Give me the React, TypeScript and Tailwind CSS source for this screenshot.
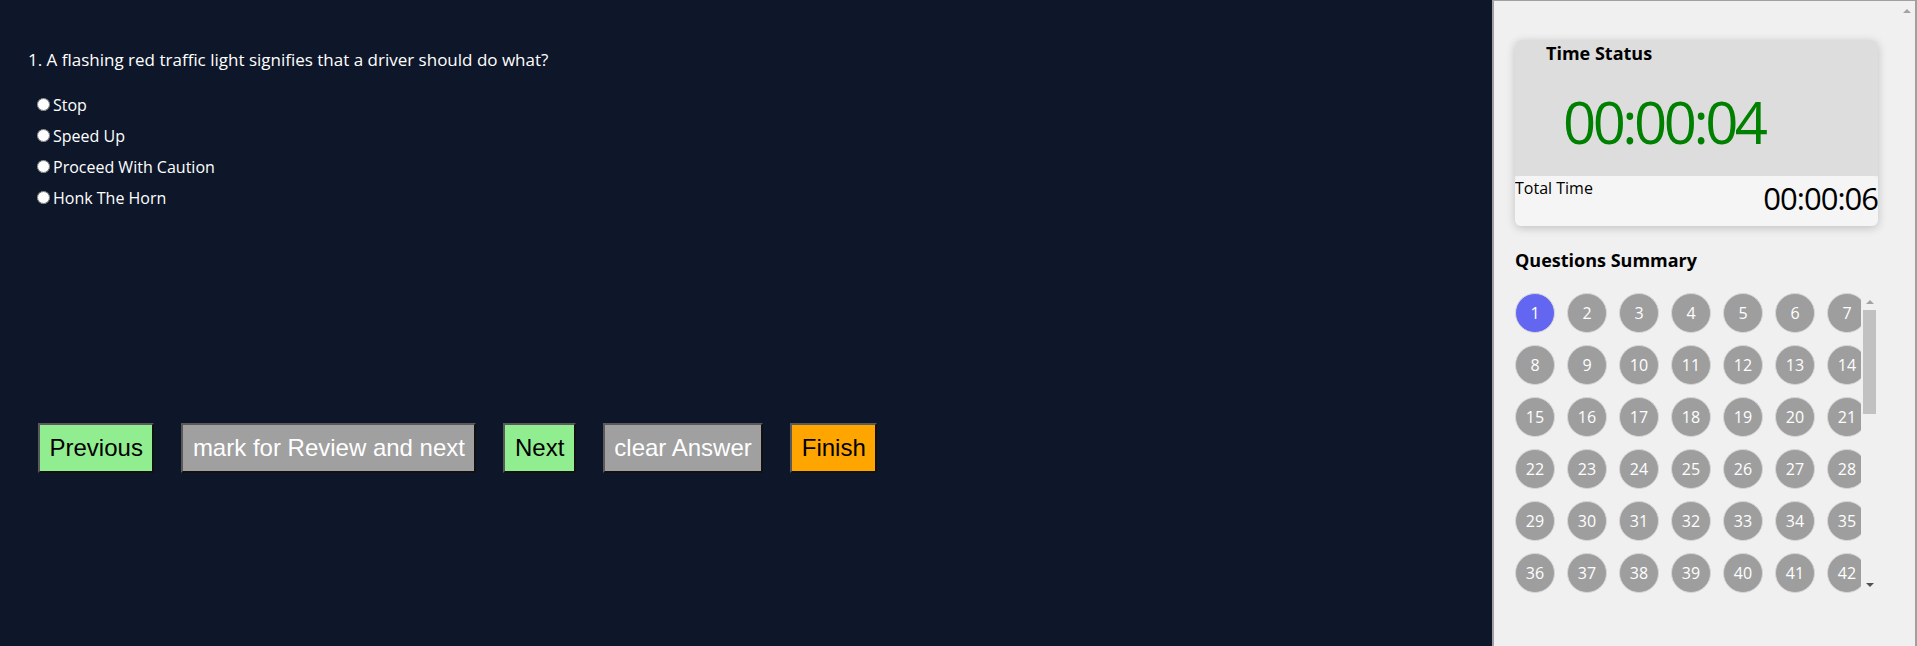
import React from 'react';

const options = ['Stop', 'Speed Up', 'Proceed With Caution', 'Honk The Horn'];

const btn =
  "h-[50px] px-[9.5px] border-2 border-solid border-t-[#5a5a5a] border-l-[#5a5a5a] border-b-[#111] border-r-[#111] font-['Liberation_Sans',Arial,sans-serif] text-[24px] leading-none whitespace-nowrap";

// small scrollbar arrow, drawn as a triangle
const Arrow: React.FC<{ dir: 'up' | 'down'; color: string }> = ({ dir, color }) => (
  <div className="flex h-[17px] w-[17px] items-center justify-center">
    <svg width="8" height="4" viewBox="0 0 8 4">
      <polygon points={dir === 'up' ? '0,4 8,4 4,0' : '0,0 8,0 4,4'} fill={color} />
    </svg>
  </div>
);

const App: React.FC = () => {
  const questions = Array.from({ length: 100 }, (_, i) => i + 1);

  return (
    <div className="flex h-screen overflow-hidden bg-[#0e1729] font-['Open_Sans',sans-serif]">
      {/* question area */}
      <main className="flex-1 bg-[#0e1729] text-white">
        <div className="pl-[28px] pt-[48px]">
          <p className="text-[17px] leading-6">1. A flashing red traffic light signifies that a driver should do what?</p>
          <div className="mt-[22px] flex flex-col gap-[10px] pl-[9px]">
            {options.map((opt) => (
              <label key={opt} className="flex h-[21px] items-center gap-[3px] text-[16px]">
                <input type="radio" name="q1" className="m-0 h-[13px] w-[13px]" />
                <span>{opt}</span>
              </label>
            ))}
          </div>
        </div>

        <div className="mt-[215px] flex gap-[27px] pl-[38px]">
          <button className={`${btn} bg-[#90ee90] text-black`}>Previous</button>
          <button className={`${btn} bg-[#a0a0a0] text-white`}>mark for Review and next</button>
          <button className={`${btn} bg-[#90ee90] text-black`}>Next</button>
          <button className={`${btn} bg-[#a0a0a0] text-white`}>clear Answer</button>
          <button className={`${btn} bg-[#ffa500] text-black`}>Finish</button>
        </div>
      </main>

      {/* side panel */}
      <aside className="flex h-[700px] w-[425px] shrink-0 border-t border-r-2 border-l-2 border-[#a0a0a0] bg-[#f0f0f0] text-black">
        <div className="flex-1 pt-[39px]">
          <div className="ml-[21px] w-[363px] overflow-hidden rounded-md shadow-[0_2px_10px_rgba(0,0,0,0.2)]">
            <div className="h-[136px] bg-[#dddddd]">
              <h3 className="pl-[31px] text-[18px] font-bold leading-[27px]">Time Status</h3>
              <div className="mt-[26px] pl-[48px] text-[58px] leading-none tracking-[-3.5px] text-[#008000]">00:00:04</div>
            </div>
            <div className="flex h-[50px] justify-between rounded-md bg-[#f5f5f5]">
              <span className="text-[16px] leading-6">Total Time</span>
              <span className="pt-[7px] text-[31px] leading-none tracking-[-1px]">00:00:06</span>
            </div>
          </div>

          <h3 className="mt-[21px] ml-[21px] text-[18px] font-bold leading-[27px]">Questions Summary</h3>

          <div className="mt-[19px] ml-[21px] flex h-[300px] w-[363px]">
            <div className="w-[346px] overflow-x-hidden overflow-y-auto [scrollbar-width:none]">
              <div className="grid grid-cols-[repeat(7,40px)] gap-[12px]">
                {questions.map((n) => (
                  <button
                    key={n}
                    className={`flex h-[40px] w-[40px] items-center justify-center rounded-full border border-[#d6d6d6] text-[16px] text-white ${
                      n === 1 ? 'bg-[#6366f1]' : 'bg-[#9e9e9e]'
                    }`}
                  >
                    {n}
                  </button>
                ))}
              </div>
            </div>
            {/* grid scrollbar */}
            <div className="flex w-[17px] flex-col">
              <Arrow dir="up" color="#a3a3a3" />
              <div className="flex-1 px-[2px]">
                <div className="h-[104px] bg-[#c1c1c1]" />
              </div>
              <Arrow dir="down" color="#505050" />
            </div>
          </div>
        </div>
        {/* panel scrollbar */}
        <div className="flex w-[17px] flex-col pt-[1px]">
          <Arrow dir="up" color="#a3a3a3" />
        </div>
      </aside>
    </div>
  );
};

export default App;
